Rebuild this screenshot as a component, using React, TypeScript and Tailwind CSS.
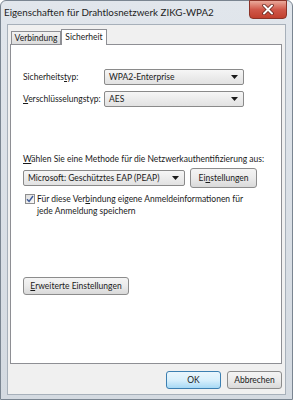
const font = { fontFamily: 'Lato, "Noto Sans", sans-serif' };

function Arrow() {
  return (
    <svg width="7" height="4" viewBox="0 0 7 4" className="shrink-0">
      <path d="M0 0 H7 L3.5 4 Z" fill="#1a1a1a" />
    </svg>
  );
}

function Combo({ label, width }: { label: string; width: string }) {
  return (
    <div
      className={`${width} flex h-[16px] items-center justify-between rounded-[2px] border border-[#8a8a8a] bg-gradient-to-b from-[#f6f6f6] to-[#e2e2e2] pl-[4px] pr-[5px] text-[8.5px] leading-none text-[#1a1a1a]`}
    >
      <span>{label}</span>
      <Arrow />
    </div>
  );
}

function Button({ children, className }: { children: React.ReactNode; className: string }) {
  return (
    <div
      className={`flex items-center justify-center rounded-[3px] border border-[#8c8c8c] bg-gradient-to-b from-[#f4f4f4] via-[#ebebeb] to-[#d9d9d9] text-[8.5px] leading-none text-[#1a1a1a] ${className}`}
    >
      {children}
    </div>
  );
}

export default function App() {
  return (
    <div
      className="relative flex h-[400px] w-[293px] flex-col rounded-t-[6px] border border-[#7a8591] bg-gradient-to-b from-[#e1e6ec] to-[#d4dae1]"
      style={font}
    >
      <div className="flex h-[23px] items-center pl-[3px] text-[9.8px] text-[#1e1e1e]">
        Eigenschaften für Drahtlosnetzwerk ZIKG-WPA2
      </div>
      <div className="absolute right-[5px] top-[-1px] flex h-[19px] w-[38px] items-center justify-center rounded-b-[4px] border border-[#8b3328] bg-gradient-to-b from-[#e9a99b] via-[#d0584a] to-[#c1402e]">
        <svg width="12" height="11" viewBox="0 0 12 11">
          <path d="M2 1.5 L10 9.5 M10 1.5 L2 9.5" stroke="#5a1c15" strokeWidth="3.4" strokeLinecap="round" />
          <path d="M2 1.5 L10 9.5 M10 1.5 L2 9.5" stroke="#ffffff" strokeWidth="2" strokeLinecap="round" />
        </svg>
      </div>

      <div className="mx-[6px] mb-[4px] flex flex-1 flex-col border border-[#a7b0ba] bg-[#f0f0f0] pl-[2px] pr-[3px] pt-[4px]">
        <div className="flex h-[15px] items-end pl-[1px]">
          <div className="flex h-[13px] w-[50px] items-center justify-center border border-b-0 border-[#8e8f94] bg-gradient-to-b from-[#f2f2f2] to-[#dcdcdc] text-[8.5px] leading-none text-[#1a1a1a]">
            Verbindung
          </div>
          <div className="relative z-10 -mb-[1px] flex h-[16px] w-[46px] items-center justify-center border border-b-0 border-[#8e8f94] bg-white pb-[1px] text-[8.5px] leading-none text-[#1a1a1a]">
            Sicherheit
          </div>
        </div>

        <div className="flex h-[320px] flex-col border border-[#8e8f94] bg-white pl-[12px] text-[8.5px] leading-none text-[#1a1a1a]">
          <div className="mt-[24px] flex items-center">
            <span className="w-[81px]">
              Sicherheits<span className="underline">t</span>yp:
            </span>
            <Combo label="WPA2-Enterprise" width="w-[140px]" />
          </div>
          <div className="mt-[6px] flex items-center">
            <span className="w-[81px]">
              <span className="underline">V</span>erschlüsselungstyp:
            </span>
            <Combo label="AES" width="w-[140px]" />
          </div>

          <div className="mt-[48px] h-[12px] whitespace-nowrap">
            <span className="underline">W</span>ählen Sie eine Methode für die Netzwerkauthentifizierung aus:
          </div>
          <div className="mt-[1px] flex items-center gap-[5px]">
            <Combo label="Microsoft: Geschütztes EAP (PEAP)" width="w-[162px]" />
            <Button className="h-[20px] w-[67px]">
              <span>
                Ei<span className="underline">n</span>stellungen
              </span>
            </Button>
          </div>

          <div className="mt-[5px] flex items-start pl-[2px]">
            <div className="mt-[1px] flex h-[10px] w-[10px] shrink-0 items-center justify-center border border-[#8f8f8f] bg-gradient-to-br from-[#dcdcdc] to-[#fbfbfb]">
              <svg width="8" height="8" viewBox="0 0 8 8">
                <path d="M1 4.2 L3.1 6.5 L7 1" fill="none" stroke="#3d5a99" strokeWidth="1.4" />
              </svg>
            </div>
            <div className="ml-[2px] whitespace-nowrap leading-[12px]">
              Für diese Ver<span className="underline">b</span>indung eigene Anmeldeinformationen für
              <br />
              jede Anmeldung speichern
            </div>
          </div>

          <div className="mt-[60px]">
            <Button className="h-[18px] w-[106px]">
              <span className="whitespace-nowrap">
                <span className="underline">E</span>rweiterte Einstellungen
              </span>
            </Button>
          </div>
        </div>

        <div className="flex justify-end gap-[6px] pt-[7px]">
          <Button className="h-[18px] w-[55px] !border-[#3c7fb1] !from-[#eaf6fd] !via-[#d9f0fc] !to-[#a7d9f5]">
            OK
          </Button>
          <Button className="h-[18px] w-[55px]">Abbrechen</Button>
        </div>
      </div>
    </div>
  );
}
